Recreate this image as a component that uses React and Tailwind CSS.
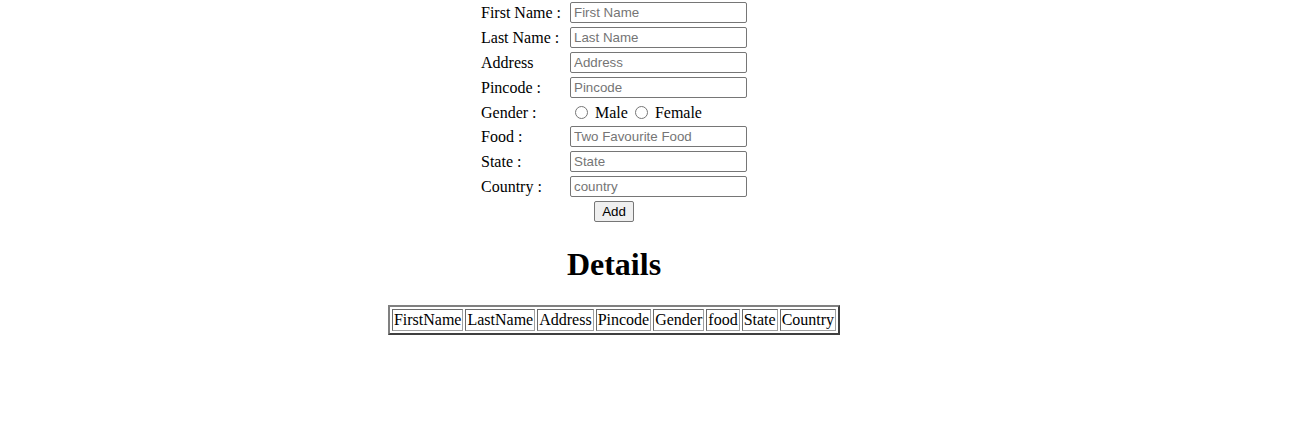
import React from "react";

const fields = [
  { label: "First Name :", placeholder: "First Name" },
  { label: "Last Name :", placeholder: "Last Name" },
  { label: "Address", placeholder: "Address" },
  { label: "Pincode :", placeholder: "Pincode" },
];

const moreFields = [
  { label: "Food :", placeholder: "Two Favourite Food" },
  { label: "State :", placeholder: "State" },
  { label: "Country :", placeholder: "country" },
];

const columns = ["FirstName", "LastName", "Address", "Pincode", "Gender", "food", "State", "Country"];

function Field({ label, placeholder }) {
  return (
    <div className="flex items-center h-[25px]">
      <label className="w-[89px]">{label}</label>
      <input
        type="text"
        placeholder={placeholder}
        className="w-[177px] h-[21px] border border-[#767676] rounded-[2px] pl-[3px] pr-[2px] text-[13.33px] font-['Liberation_Sans',Arial,sans-serif] placeholder:text-[#757575] outline-none"
      />
    </div>
  );
}

export default function App() {
  return (
    <div className="w-[1228px] flex flex-col items-center bg-white text-black text-[16px] font-['Liberation_Serif','Times_New_Roman',serif]">
      <form className="w-[266px]" onSubmit={(e) => e.preventDefault()}>
        {fields.map((f) => (
          <Field key={f.label} {...f} />
        ))}
        <div className="flex items-center h-[24px] pt-[2px]">
          <label className="w-[89px]">Gender :</label>
          <input type="radio" name="gender" className="ml-[5px] mr-[3px] -mt-[1px]" />
          <span className="ml-[4px]">Male</span>
          <input type="radio" name="gender" className="ml-[7px] mr-[3px] -mt-[1px]" />
          <span className="ml-[4px]">Female</span>
        </div>
        {moreFields.map((f) => (
          <Field key={f.label} {...f} />
        ))}
        <div className="flex justify-center items-center h-[25px]">
          <button
            type="submit"
            className="w-[40px] h-[21px] bg-[#efefef] border border-[#767676] rounded-[2px] text-[13.33px] font-['Liberation_Sans',Arial,sans-serif]"
          >
            Add
          </button>
        </div>
      </form>

      <h1 className="mt-[22px] mb-[22px] text-[32px] leading-[37px] font-bold">Details</h1>

      <table className="border-separate border-spacing-[2px] border-2 border-t-[#808080] border-l-[#808080] border-b-[#3f3f3f] border-r-[#3f3f3f]">
        <tbody>
          <tr>
            {columns.map((c) => (
              <td key={c} className="p-[1px] leading-[18px] border border-t-[#6b6b6b] border-l-[#6b6b6b] border-b-[#a0a0a0] border-r-[#a0a0a0]">
                {c}
              </td>
            ))}
          </tr>
        </tbody>
      </table>
    </div>
  );
}
